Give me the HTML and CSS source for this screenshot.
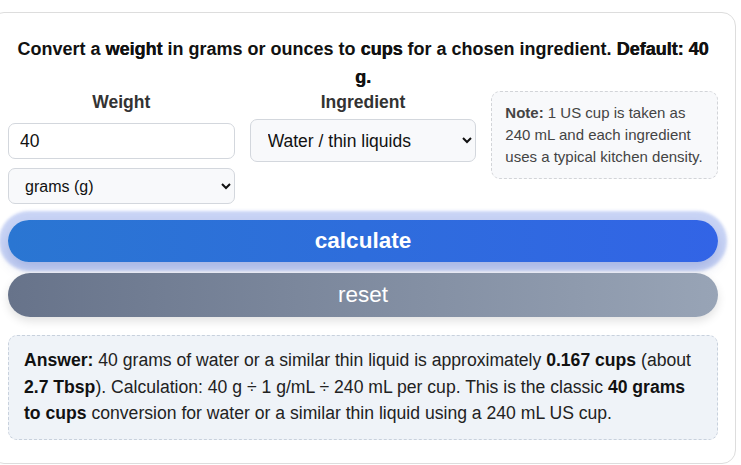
FILE: index.html
```html
<!DOCTYPE html>
<html lang="en">
<head>
    <meta charset="UTF-8">
    <meta name="viewport" content="width=device-width, initial-scale=1.0">
    <title>Grams to Cups</title>
    <link rel="stylesheet" href="styles.css">
</head>
<body>
    <div class="card">
        <p class="intro">Convert a <strong>weight</strong> in grams or ounces to <strong>cups</strong> for a chosen ingredient. <strong>Default: 40 g.</strong></p>

        <div class="fields">
            <div class="field">
                <label for="weight">Weight</label>
                <input type="text" id="weight" class="weight-input" value="40">
                <select id="unit" class="unit-select">
                    <option>grams (g)</option>
                    <option>ounces (oz)</option>
                </select>
            </div>
            <div class="field">
                <label for="ingredient">Ingredient</label>
                <select id="ingredient" class="ingredient-select">
                    <option>Water / thin liquids</option>
                    <option>All-purpose flour</option>
                    <option>Granulated sugar</option>
                    <option>Butter</option>
                </select>
            </div>
            <div class="note">
                <strong>Note:</strong> 1 US cup is taken as 240 mL and each ingredient uses a typical kitchen density.
            </div>
        </div>

        <button class="btn btn-calc" onclick="calculate()">calculate</button>
        <button class="btn btn-reset" onclick="resetForm()">reset</button>

        <div id="answer" class="answer">
            <strong>Answer:</strong> 40 grams of water or a similar thin liquid is approximately <strong>0.167 cups</strong> (about <strong>2.7 Tbsp</strong>). Calculation: 40 g ÷ 1 g/mL ÷ 240 mL per cup. This is the classic <strong>40 grams to cups</strong> conversion for water or a similar thin liquid using a 240 mL US cup.
        </div>
    </div>

    <script>
        function calculate() {}
        function resetForm() {
            document.getElementById('weight').value = '40';
        }
    </script>
</body>
</html>
```

FILE: styles.css
```css
body {
    margin: 0;
    background-color: #ffffff;
    font-family: 'Liberation Sans', Arial, sans-serif;
    color: #222;
}

.card {
    margin: 12px 5px 0 -10px;
    padding: 22px 17px 23px 17px;
    border: 1px solid #dddddd;
    border-radius: 14px;
    background: #fff;
}

.intro {
    margin: 0;
    text-align: center;
    font-size: 18px;
    line-height: 28px;
    font-weight: 700;
    color: #111;
}

.intro strong {
    font-weight: 900;
    text-shadow: 0.4px 0 0 #111;
}

.fields {
    display: grid;
    grid-template-columns: repeat(3, minmax(0, 1fr));
    gap: 15px;
    align-items: start;
}

.field {
    display: flex;
    flex-direction: column;
    min-width: 0;
}

.field label {
    text-align: center;
    font-weight: 700;
    font-size: 17.5px;
    line-height: 22px;
    margin-bottom: 6px;
    color: #333;
}

.weight-input,
.unit-select,
.ingredient-select {
    width: 100%;
    min-width: 0;
    box-sizing: border-box;
    border: 1px solid #d3d7dd;
    border-radius: 7px;
    font-family: inherit;
    color: #111;
}

.weight-input {
    margin-top: 4px;
    height: 36px;
    padding: 0 11px;
    font-size: 17.5px;
}

.unit-select,
.ingredient-select {
    background-color: #f8f9fb;
}

.unit-select {
    margin-top: 9px;
    height: 36px;
    padding: 0 10px 0 12px;
    font-size: 16px;
}

.ingredient-select {
    height: 43px;
    padding: 0 8px 0 13px;
    font-size: 17.5px;
}

.note {
    padding: 10px 11px 10px 13px;
    border: 1px dashed #d2d4d8;
    border-radius: 9px;
    background-color: #f8f9fb;
    font-size: 15px;
    line-height: 22px;
    color: #444;
}

.btn {
    display: block;
    width: 100%;
    border: none;
    border-radius: 22px;
    color: #fff;
    font-family: inherit;
    font-size: 22.5px;
    cursor: pointer;
}

.btn-calc {
    margin-top: 16px;
    height: 42px;
    font-weight: 700;
    background: linear-gradient(90deg, #2a76d2, #3264e6);
    box-shadow: 0 0 3px 9px rgba(80, 115, 225, 0.3), 0 6px 14px rgba(40, 60, 140, 0.25);
}

.btn-reset {
    margin-top: 11px;
    height: 44px;
    background: linear-gradient(90deg, #67738a, #98a4b6);
    box-shadow: 0 4px 10px rgba(0, 0, 0, 0.12);
}

.answer {
    margin-top: 18px;
    padding: 11px 15px 12px;
    border: 1px dashed #c8d1dd;
    border-radius: 9px;
    background-color: #eff3f8;
    font-size: 17.6px;
    line-height: 26.5px;
    color: #222;
}

.answer strong {
    color: #111;
}
```
